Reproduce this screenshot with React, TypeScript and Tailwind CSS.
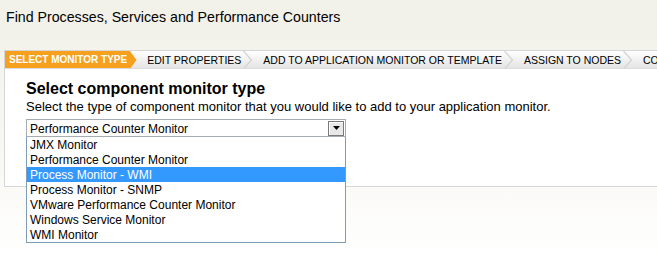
import React from 'react';

const steps = [
  'EDIT PROPERTIES',
  'ADD TO APPLICATION MONITOR OR TEMPLATE',
  'ASSIGN TO NODES',
  'COMMIT',
];

const options = [
  'JMX Monitor',
  'Performance Counter Monitor',
  'Process Monitor - WMI',
  'Process Monitor - SNMP',
  'VMware Performance Counter Monitor',
  'Windows Service Monitor',
  'WMI Monitor',
];

const Chevron = () => (
  <svg width="11" height="18" viewBox="0 0 11 18" className="shrink-0">
    <path d="M1.5 0 L9.5 9 L1.5 18" fill="none" stroke="#d2d2d2" strokeWidth="1.2" />
  </svg>
);

const App: React.FC = () => {
  const selected = 2;

  return (
    <div className="w-[657px] h-[260px] overflow-hidden bg-gradient-to-b from-[#f2f1e8] via-[#f7f6f1] to-white font-['Liberation_Sans',Arial,sans-serif] text-black">
      {/* Title */}
      <div className="h-[50px] pl-[6px] pt-[8px] text-[14.2px] leading-[18px]">
        Find Processes, Services and Performance Counters
      </div>

      {/* Wizard panel */}
      <div className="ml-[4px] h-[137px] border border-r-0 border-[#d6d6d6] bg-white">
        {/* Step bar */}
        <div className="flex h-[18px] items-center overflow-hidden whitespace-nowrap bg-gradient-to-b from-white to-[#e4e4e4] text-[10.5px] leading-[18px] border-b border-[#dcdcdc]">
          <div className="flex h-full shrink-0 items-center">
            <div className="h-full bg-[#f6a01e] pl-[4px] pr-[3px] text-[10px] font-bold text-white">SELECT MONITOR TYPE</div>
            <svg width="7" height="18" viewBox="0 0 7 18" className="shrink-0">
              <path d="M0 0 L6.5 9 L0 18 Z" fill="#f6a01e" />
            </svg>
          </div>
          {steps.map((s) => (
            <React.Fragment key={s}>
              <span className="shrink-0 pl-[10px] pr-[1px]">{s}</span>
              <Chevron />
            </React.Fragment>
          ))}
        </div>

        {/* Content */}
        <div className="pl-[21px] pt-[10px]">
          <div className="text-[16px] font-bold leading-[20px]">Select component monitor type</div>
          <div className="text-[13px] leading-[16px]">
            Select the type of component monitor that you would like to add to your application monitor.
          </div>

          {/* Select with opened list */}
          <div className="relative mt-[4px] w-[320px]">
            <div className="flex h-[18px] items-center border border-[#a5acb2] bg-white">
              <span className="flex-1 pl-[3px] pt-[1px] text-[12px] leading-[16px]">Performance Counter Monitor</span>
              <div className="mr-[1px] flex h-[15px] w-[16px] items-center justify-center border border-[#7a7a7a] bg-[#e8e8e8] shadow-[inset_1px_1px_0_#fff]">
                <svg width="7" height="4" viewBox="0 0 7 4">
                  <path d="M0 0 H7 L3.5 4 Z" fill="#000" />
                </svg>
              </div>
            </div>
            <ul className="absolute left-0 top-[18px] w-[320px] border border-t-0 border-[#7f9db9] bg-white text-[12px]">
              {options.map((o, i) => (
                <li
                  key={o}
                  className={`h-[15px] pl-[3px] pt-[1px] leading-[15px] ${i === selected ? 'bg-[#3399ff] text-white' : 'text-[#000]'}`}
                >
                  {o}
                </li>
              ))}
            </ul>
          </div>
        </div>
      </div>
    </div>
  );
};

export default App;
